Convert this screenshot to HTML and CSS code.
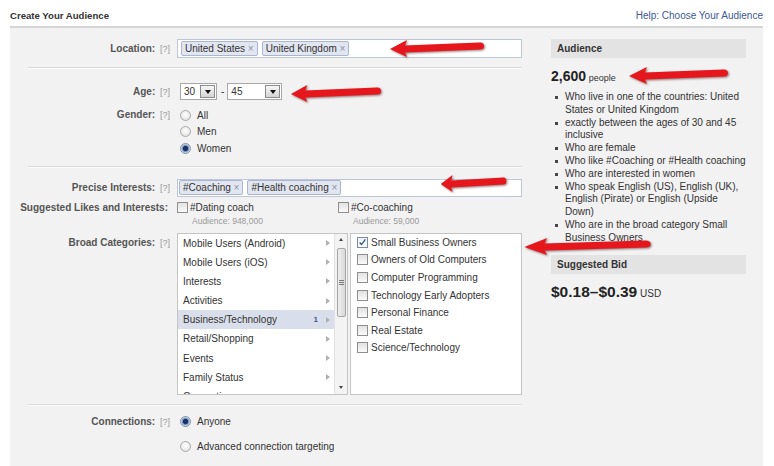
FILE: index.html
```html
<!DOCTYPE html>
<html>
<head>
<meta charset="utf-8">
<link rel="stylesheet" href="styles.css">
</head>
<body>
<div class="page">
  <div class="topbar">
    <span class="title">Create Your Audience</span>
    <a class="help">Help: Choose Your Audience</a>
  </div>
  <div class="panel">
    <div class="form">
      <div class="row r-location">
        <div class="label">Location: <span class="q">[?]</span></div>
        <div class="tokens">
          <span class="token">United States <i>×</i></span>
          <span class="token">United Kingdom <i>×</i></span>
        </div>
      </div>
      <div class="sep"></div>

      <div class="row r-age">
        <div class="label">Age: <span class="q">[?]</span></div>
        <div class="age">
          <span class="sel s30"><span>30</span><span class="btn"><b></b></span></span>
          <span class="dash">-</span>
          <span class="sel s45"><span>45</span><span class="btn"><b></b></span></span>
        </div>
      </div>
      <div class="row r-gender">
        <div class="label lh16">Gender: <span class="q">[?]</span></div>
        <div class="radios">
          <div class="ropt"><span class="radio"></span>All</div>
          <div class="ropt"><span class="radio"></span>Men</div>
          <div class="ropt"><span class="radio on"></span>Women</div>
        </div>
      </div>
      <div class="sep sep2"></div>

      <div class="row r-precise">
        <div class="label lh18">Precise Interests: <span class="q">[?]</span></div>
        <div class="tokens tk2">
          <span class="token">#Coaching <i>×</i></span>
          <span class="token">#Health coaching <i>×</i></span>
        </div>
      </div>
      <div class="row r-sugg">
        <div class="label lh14 nq">Suggested Likes and Interests:</div>
        <div class="sugg">
          <div class="sitem">
            <div class="sline"><span class="cb"></span>#Dating coach</div>
            <div class="saud">Audience: 948,000</div>
          </div>
          <div class="sitem">
            <div class="sline"><span class="cb"></span>#Co-coaching</div>
            <div class="saud">Audience: 59,000</div>
          </div>
        </div>
      </div>
      <div class="row r-broad">
        <div class="label lh19">Broad Categories: <span class="q">[?]</span></div>
        <div class="broad">
          <div class="listbox">
            <div class="items">
              <div class="item">Mobile Users (Android)<span class="tri"></span></div>
              <div class="item">Mobile Users (iOS)<span class="tri"></span></div>
              <div class="item">Interests<span class="tri"></span></div>
              <div class="item">Activities<span class="tri"></span></div>
              <div class="item sel-item">Business/Technology<span class="cnt">1</span><span class="tri"></span></div>
              <div class="item">Retail/Shopping<span class="tri"></span></div>
              <div class="item">Events<span class="tri"></span></div>
              <div class="item">Family Status<span class="tri"></span></div>
              <div class="item">Generation<span class="tri"></span></div>
            </div>
            <div class="sb">
              <div class="sbtn"><b class="up"></b></div>
              <div class="thumb"><span></span><span></span><span></span></div>
              <div class="sfill"></div>
              <div class="sbtn"><b class="down"></b></div>
            </div>
          </div>
          <div class="checklist">
            <div class="citem"><span class="cb on"><svg viewBox="0 0 11 11" width="9" height="9"><path d="M2 5.5 L4.3 8 L9 1.8" fill="none" stroke="#2d4f8a" stroke-width="1.6"/></svg></span>Small Business Owners</div>
            <div class="citem"><span class="cb"></span>Owners of Old Computers</div>
            <div class="citem"><span class="cb"></span>Computer Programming</div>
            <div class="citem"><span class="cb"></span>Technology Early Adopters</div>
            <div class="citem"><span class="cb"></span>Personal Finance</div>
            <div class="citem"><span class="cb"></span>Real Estate</div>
            <div class="citem"><span class="cb"></span>Science/Technology</div>
          </div>
        </div>
      </div>
      <div class="sep sep3"></div>

      <div class="row r-conn">
        <div class="label lh16">Connections: <span class="q">[?]</span></div>
        <div class="radios conn">
          <div class="ropt"><span class="radio on"></span>Anyone</div>
          <div class="ropt"><span class="radio"></span>Advanced connection targeting</div>
        </div>
      </div>
    </div>

    <div class="side">
      <div class="boxh">Audience</div>
      <div class="count"><b>2,600</b> <small>people</small></div>
      <ul class="crit">
        <li>Who live in one of the countries: United<br>States or United Kingdom</li>
        <li>exactly between the ages of 30 and 45<br>inclusive</li>
        <li>Who are female</li>
        <li>Who like #Coaching or #Health coaching</li>
        <li>Who are interested in women</li>
        <li>Who speak English (US), English (UK),<br>English (Pirate) or English (Upside<br>Down)</li>
        <li>Who are in the broad category Small<br>Business Owners</li>
      </ul>
      <div class="boxh bid">Suggested Bid</div>
      <div class="price"><b>$0.18–$0.39</b> <span>USD</span></div>
    </div>
  </div>

  <svg class="arrow a1" viewBox="0 0 96 20" preserveAspectRatio="none"><path d="M1 11 L18 2 L16 7.5 L91 4.5 Q95 4.5 95 8 Q95 11.5 91 11.5 L16 14.5 L18 19 Z"/></svg>
  <svg class="arrow a2" viewBox="0 0 96 20" preserveAspectRatio="none"><path d="M1 11 L18 2 L16 7.5 L91 4.5 Q95 4.5 95 8 Q95 11.5 91 11.5 L16 14.5 L18 19 Z"/></svg>
  <svg class="arrow a3" viewBox="0 0 96 20" preserveAspectRatio="none"><path d="M1 11 L18 2 L16 7.5 L91 4.5 Q95 4.5 95 8 Q95 11.5 91 11.5 L16 14.5 L18 19 Z"/></svg>
  <svg class="arrow a4" viewBox="0 0 96 20" preserveAspectRatio="none"><path d="M1 11 L18 2 L16 7.5 L91 4.5 Q95 4.5 95 8 Q95 11.5 91 11.5 L16 14.5 L18 19 Z"/></svg>
  <svg class="arrow a5" viewBox="0 0 96 20" preserveAspectRatio="none"><path d="M1 11 L18 2 L16 7.5 L91 4.5 Q95 4.5 95 8 Q95 11.5 91 11.5 L16 14.5 L18 19 Z"/></svg>
</div>
</body>
</html>
```

FILE: styles.css
```css
* { box-sizing: border-box; }
html, body { margin: 0; padding: 0; background: #fff; }
body {
  font-family: "Liberation Sans", Arial, sans-serif;
  font-size: 10px;
  color: #333;
}
.page {
  position: relative;
  width: 774px;
  height: 466px;
  overflow: hidden;
}
.topbar {
  margin: 0 11px 0 10px;
  height: 28px;
  padding-top: 4px;
  border-bottom: 2px solid #d5d5d5;
  display: flex;
  justify-content: space-between;
  align-items: center;
}
.title { font-weight: bold; color: #333; font-size: 9.6px; }
.help { color: #3b5998; }

.panel {
  margin: 0 11px 0 10px;
  height: 438px;
  background: #f2f2f2;
  display: flex;
  padding-top: 11px;
}
.form { width: 512px; }
.side { width: 195px; margin-left: 29px; }

.row {
  display: grid;
  grid-template-columns: 160px 345px;
  column-gap: 7px;
}
.label {
  text-align: right;
  font-weight: bold;
  color: #555;
  line-height: 19px;
}
.label .q { font-weight: normal; color: #999; font-size: 9px; margin-left: 2px; }
.label.nq { padding-right: 2px; }
.lh16 { line-height: 16.5px; }
.lh18 { line-height: 18px; }
.lh14 { line-height: 14px; }
.lh19 { line-height: 19px; }

.sep {
  margin: 8px 0 0 18px;
  width: 494px;
  border-top: 1px solid #dadada;
  border-bottom: 1px solid #fbfbfb;
}

.tokens {
  height: 19px;
  background: #fff;
  border: 1px solid #bdc7d8;
  display: flex;
  align-items: center;
  gap: 4px;
  padding-left: 3px;
}
.tokens.tk2 { height: 18px; padding-left: 1px; }
.token {
  height: 15px;
  line-height: 13px;
  padding: 0 3px 0 3px;
  background: #e2e6f0;
  border: 1px solid #a9b6d1;
  border-radius: 2px;
  color: #333;
  white-space: nowrap;
}
.token i { font-style: normal; color: #8a94a8; font-size: 10px; }

.r-age { margin-top: 14px; }
.r-age .label { line-height: 17px; }
.age { display: flex; align-items: center; padding-left: 3px; height: 17px; }
.sel {
  height: 17px;
  border: 1px solid #a8a8a8;
  background: #fff;
  display: flex;
  align-items: center;
  justify-content: space-between;
  padding: 0 1px 0 3px;
}
.s30 { width: 37px; }
.s45 { width: 55px; }
.sel .btn {
  width: 15px;
  height: 13px;
  border: 1px solid #8c8c8c;
  background: linear-gradient(#f7f7f7, #d4d4d4);
  display: flex;
  align-items: center;
  justify-content: center;
}
.sel .btn b {
  width: 0; height: 0;
  border-left: 3px solid transparent;
  border-right: 3px solid transparent;
  border-top: 4px solid #111;
}
.dash { margin: 0 3px 0 4px; }

.r-gender { margin-top: 6px; }
.radios { padding-left: 3px; }
.ropt {
  display: flex;
  align-items: center;
  height: 16.5px;
}
.radio {
  width: 11px;
  height: 11px;
  border-radius: 50%;
  border: 1px solid #a8a8a8;
  background: radial-gradient(circle at 50% 40%, #ffffff, #dedede);
  margin-right: 6px;
  flex: none;
}
.radio.on {
  border-color: #7f8fa8;
  background: radial-gradient(circle, #1b3563 0, #1b3563 2.2px, #6f8fbd 3px, #d9e3f0 4.5px);
}

.sep2 { margin-top: 9px; }
.r-precise { margin-top: 11px; }

.r-sugg { margin-top: 4px; }
.sugg { display: flex; }
.sitem { width: 161px; }
.sline { display: flex; align-items: center; height: 14px; }
.saud { padding-left: 15px; font-size: 8.5px; color: #999; line-height: 12px; }
.cb {
  width: 11px;
  height: 11px;
  border: 1px solid #8e8e8e;
  background: linear-gradient(#e2e2e2, #fafafa);
  margin-right: 2px;
  flex: none;
  display: flex;
  align-items: center;
  justify-content: center;
}
.cb.on { background: linear-gradient(#eef2f8, #fff); border-color: #7c8aa3; }

.r-broad { margin-top: 6px; }
.broad { display: flex; gap: 2px; height: 162px; }
.listbox {
  width: 171px;
  border: 1px solid #c4c4c4;
  background: #fff;
  display: flex;
  overflow: hidden;
}
.items { flex: 1; overflow: hidden; }
.item {
  height: 19.2px;
  line-height: 19.2px;
  padding: 0 4px 0 5px;
  display: flex;
  align-items: center;
  color: #333;
  white-space: nowrap;
}
.item .tri {
  margin-left: auto;
  width: 0; height: 0;
  border-top: 3px solid transparent;
  border-bottom: 3px solid transparent;
  border-left: 4px solid #b0b0b0;
}
.item .cnt { margin-left: auto; margin-right: 8px; color: #3b5998; font-weight: bold; font-size: 8px; }
.item .cnt + .tri { margin-left: 0; }
.sel-item { background: #d9dfea; }
.sb {
  width: 13px;
  background: #f3f3f3;
  border-left: 1px solid #e2e2e2;
  display: flex;
  flex-direction: column;
  align-items: center;
}
.sbtn { height: 12px; width: 100%; display: flex; align-items: center; justify-content: center; }
.sbtn b { width: 0; height: 0; border-left: 2.5px solid transparent; border-right: 2.5px solid transparent; }
.sbtn b.up { border-bottom: 3px solid #444; }
.sbtn b.down { border-top: 3px solid #444; }
.thumb {
  margin-top: 2px;
  width: 9px;
  height: 69px;
  border: 1px solid #a5a5a5;
  border-radius: 2px;
  background: linear-gradient(90deg, #f0f0f0, #d8d8d8);
  display: flex;
  flex-direction: column;
  align-items: center;
  justify-content: center;
  gap: 1px;
}
.thumb span { width: 5px; height: 1px; background: #777; }
.sfill { flex: 1; }

.checklist {
  width: 172px;
  border: 1px solid #c4c4c4;
  background: #fff;
}
.citem {
  height: 17.6px;
  display: flex;
  align-items: center;
  padding-left: 6px;
  white-space: nowrap;
}
.citem .cb { margin-right: 3px; }

.sep3 { margin-top: 9px; }
.r-conn { margin-top: 8px; }
.conn { display: flex; flex-direction: column; gap: 8.5px; }
.conn .ropt { height: 16px; }

.boxh {
  height: 19px;
  line-height: 19px;
  background: #e3e3e3;
  padding-left: 6px;
  font-weight: bold;
  color: #333;
}
.count { margin-top: 9px; line-height: 18px; }
.count b { font-size: 14px; color: #222; }
.count small { font-size: 9px; }
.crit {
  list-style: none;
  margin: 4px 0 0;
  padding: 0 0 0 14px;
  line-height: 12.8px;
  white-space: nowrap;
}
.crit li { position: relative; }
.crit li::before {
  content: "";
  position: absolute;
  left: -10px;
  top: 5px;
  width: 3px;
  height: 3px;
  background: #444;
}
.bid { margin-top: 10px; }
.price { margin-top: 8px; line-height: 20px; }
.price b { font-size: 15.5px; color: #222; }
.price span { font-size: 10px; }

.arrow {
  position: absolute;
  height: 20px;
  fill: #e5171c;
  filter: drop-shadow(1px 1px 1px rgba(60, 0, 0, 0.55));
}
.a1 { left: 389px; top: 38px; width: 96px; }
.a2 { left: 290px; top: 83px; width: 92px; }
.a3 { left: 628px; top: 65px; width: 101px; }
.a4 { left: 440px; top: 173px; width: 67px; }
.a5 { left: 523px; top: 236px; width: 129px; }
```
